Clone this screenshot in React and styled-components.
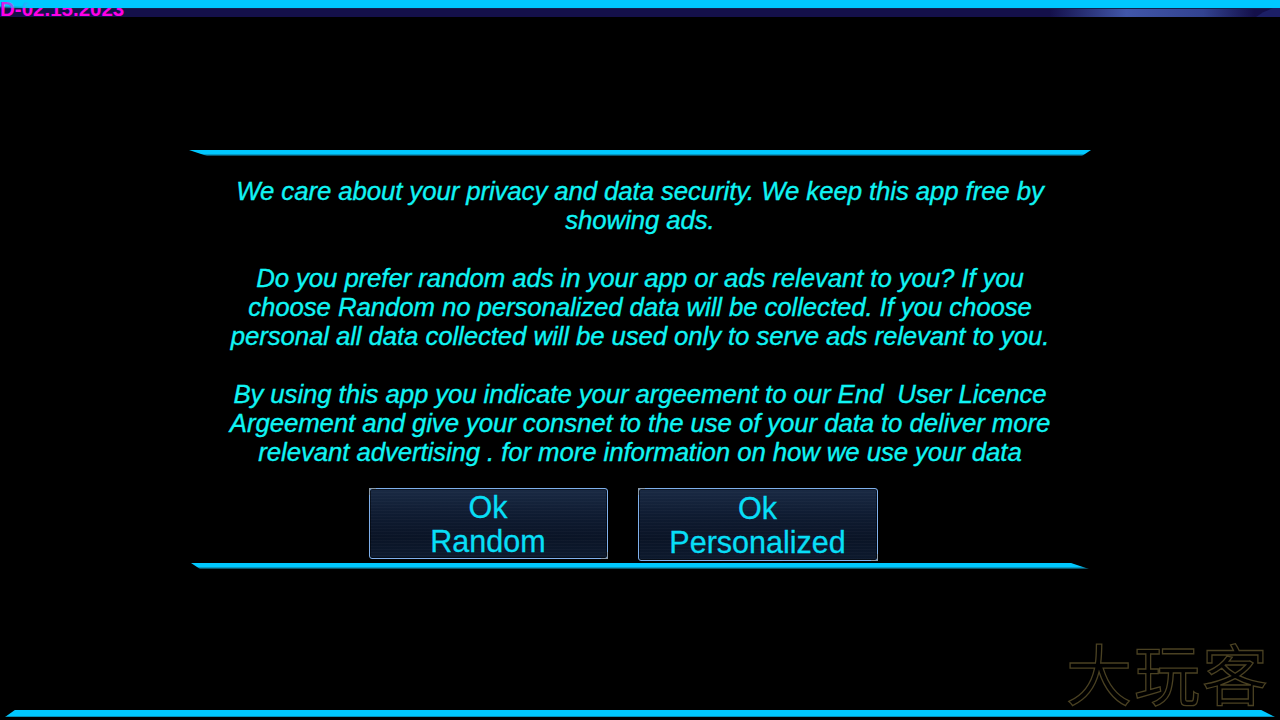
import styled, { createGlobalStyle } from "styled-components"

const GlobalStyle = createGlobalStyle`
    html, body {
        margin: 0;
        padding: 0;
        background: #000;
    }
    #root {
        width: 1280px;
        height: 720px;
        overflow: hidden;
    }
`

const StyledScreen = styled.div`
    position: relative;
    display: flex;
    flex-direction: column;
    width: 1280px;
    height: 720px;
    background: #000;
    font-family: "Liberation Sans", Arial, sans-serif;
`

const StyledTopBar = styled.div`
    position: relative;
    height: 17px;
    flex-shrink: 0;
    overflow: hidden;
    background:
        linear-gradient(90deg, transparent 0%, transparent 82%, rgba(80, 110, 200, 0.75) 88%, rgba(70, 100, 190, 0.6) 94%, transparent 98%) 0 9px / 100% 8px no-repeat,
        linear-gradient(180deg, #00c8ff 0px, #00c8ff 6px, #0a6d8a 7px, #123050 8px, #14104a 9px, #14104a 17px);
    &::before {
        content: "";
        position: absolute;
        left: 0;
        top: 0;
        right: 0;
        height: 8px;
        z-index: 2;
        background: linear-gradient(90deg, rgba(0, 200, 255, 0) 0, rgba(0, 200, 255, 0.6) 14px, #00c8ff 30px);
    }
    &::after {
        content: "";
        position: absolute;
        right: 0;
        top: 5px;
        width: 24px;
        height: 12px;
        background: #1c1f66;
        clip-path: polygon(100% 0, 100% 100%, 0 100%, 30% 60%);
    }
`

const StyledStamp = styled.span`
    position: absolute;
    left: 0;
    top: -1px;
    font-size: 20.5px;
    font-weight: bold;
    line-height: 20px;
    color: #ff00e6;
    z-index: 1;
`

const StyledMain = styled.div`
    flex: 1;
    display: flex;
    flex-direction: column;
    align-items: center;
    padding-top: 133px;
`

const StyledDialog = styled.div`
    display: flex;
    flex-direction: column;
    align-items: center;
    width: 902px;
`

const StyledRule = styled.div`
    align-self: ${p => (p.$inset ? "center" : "stretch")};
    width: ${p => (p.$inset ? "898px" : "auto")};
    margin-top: ${p => (p.$inset ? "2px" : "0")};
    height: 6px;
    background: linear-gradient(180deg, #00c8ff 0, #00c8ff 4px, #0a6f8c 5px, #083848 6px);
    clip-path: ${p =>
        p.$flip
            ? "polygon(0 0, 98% 0, 100% 100%, 1% 100%)"
            : "polygon(0 0, 100% 0, 99% 100%, 2% 100%)"};
`

const StyledMessage = styled.div`
    margin-top: 21px;
    width: 880px;
    color: #10f4f4;
    font-size: 25.8px;
    font-style: italic;
    line-height: 29px;
    text-align: center;
    letter-spacing: -0.1px;
    white-space: nowrap;
    -webkit-text-stroke: 0.35px #10f4f4;
`

const StyledParagraph = styled.p`
    margin: 0 0 29px;
    &:last-child {
        margin-bottom: 0;
    }
`

const StyledButtonRow = styled.div`
    display: flex;
    gap: 30px;
    margin-top: 21px;
    margin-left: -34px;
`

const StyledButton = styled.button`
    position: relative;
    width: ${p => p.$width}px;
    height: ${p => p.$height}px;
    padding: 0;
    border: 1px solid #7fb0ec;
    border-radius: 3px;
    background:
        repeating-linear-gradient(180deg, rgba(255, 255, 255, 0.025) 0 1px, transparent 1px 3px),
        linear-gradient(180deg, #1a2a44 0%, #0f1c32 35%, #0a1426 70%, #0d1a2e 100%);
    color: #08def6;
    font-family: "Liberation Sans", Arial, sans-serif;
    font-size: 30.5px;
    line-height: 34px;
    cursor: pointer;
    -webkit-text-stroke: 0.3px #08def6;
    box-shadow: inset 0 0 0 1px rgba(0, 0, 0, 0.5);
    &::before, &::after {
        content: "";
        position: absolute;
        width: 6px;
        height: 6px;
        border-color: #8a9aa8;
        border-style: solid;
    }
    &::before {
        top: -1px;
        left: -1px;
        border-width: 1px 0 0 1px;
    }
    &::after {
        right: -1px;
        bottom: -1px;
        border-width: 0 1px 1px 0;
    }
`

const StyledButtonText = styled.span`
    display: block;
`

const StyledBottomRule = styled.div`
    height: 9px;
    margin: 0 5px 3px 5px;
    flex-shrink: 0;
    background: linear-gradient(180deg, transparent 0, transparent 2px, #00c8ff 2px, #00c8ff 8px, #0a5f78 9px);
    clip-path: polygon(1% 0, 98.6% 0, 100% 100%, 0 100%);
`

const StyledWatermark = styled.div`
    position: absolute;
    right: 10px;
    bottom: 16px;
    font-family: "Noto Sans CJK SC", sans-serif;
    font-size: 66px;
    font-weight: 400;
    line-height: 1;
    letter-spacing: 2px;
    color: transparent;
    -webkit-text-stroke: 1.3px #4a4122;
`

function App() {
    return (
        <StyledScreen>
            <GlobalStyle />
            <StyledTopBar>
                <StyledStamp>D-02.15.2023</StyledStamp>
            </StyledTopBar>
            <StyledMain>
                <StyledDialog>
                    <StyledRule />
                    <StyledMessage>
                        <StyledParagraph>
                            We care about your privacy and data security. We keep this app free by<br />
                            showing ads.
                        </StyledParagraph>
                        <StyledParagraph>
                            Do you prefer random ads in your app or ads relevant to you? If you<br />
                            choose Random no personalized data will be collected. If you choose<br />
                            personal all data collected will be used only to serve ads relevant to you.
                        </StyledParagraph>
                        <StyledParagraph>
                            By using this app you indicate your argeement to our End&nbsp; User Licence<br />
                            Argeement and give your consnet to the use of your data to deliver more<br />
                            relevant advertising . for more information on how we use your data
                        </StyledParagraph>
                    </StyledMessage>
                    <StyledButtonRow>
                        <StyledButton $width={239} $height={71}>
                            <StyledButtonText>Ok<br />Random</StyledButtonText>
                        </StyledButton>
                        <StyledButton $width={240} $height={73}>
                            <StyledButtonText>Ok<br />Personalized</StyledButtonText>
                        </StyledButton>
                    </StyledButtonRow>
                    <StyledRule $inset $flip />
                </StyledDialog>
            </StyledMain>
            <StyledBottomRule />
            <StyledWatermark>大玩客</StyledWatermark>
        </StyledScreen>
    )
}

export default App
